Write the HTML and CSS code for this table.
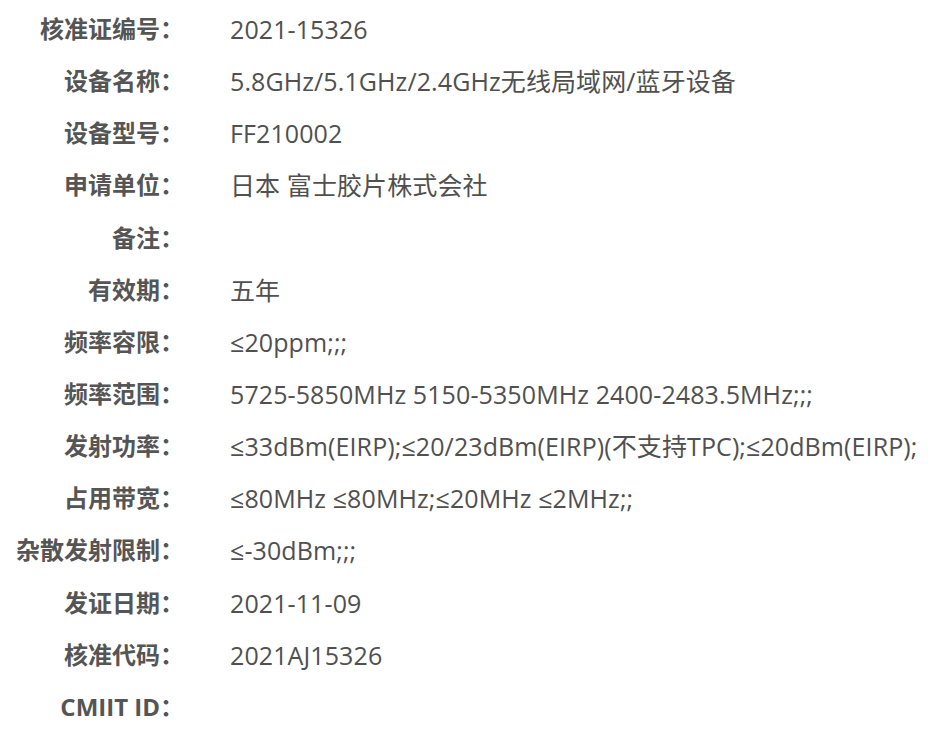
FILE: index.html
```html
<!DOCTYPE html>
<html lang="zh-CN">
<head>
<meta charset="utf-8">
<link rel="stylesheet" href="styles.css">
</head>
<body>
<div class="info">
  <div class="label">核准证编号：</div><div class="value">2021-15326</div>
  <div class="label">设备名称：</div><div class="value">5.8GHz/5.1GHz/2.4GHz无线局域网/蓝牙设备</div>
  <div class="label">设备型号：</div><div class="value">FF210002</div>
  <div class="label">申请单位：</div><div class="value">日本 富士胶片株式会社</div>
  <div class="label">备注：</div><div class="value"></div>
  <div class="label">有效期：</div><div class="value">五年</div>
  <div class="label">频率容限：</div><div class="value">≤20ppm;;;</div>
  <div class="label">频率范围：</div><div class="value">5725-5850MHz 5150-5350MHz 2400-2483.5MHz;;;</div>
  <div class="label">发射功率：</div><div class="value">≤33dBm(EIRP);≤20/23dBm(EIRP)(不支持TPC);≤20dBm(EIRP);</div>
  <div class="label">占用带宽：</div><div class="value">≤80MHz ≤80MHz;≤20MHz ≤2MHz;;</div>
  <div class="label">杂散发射限制：</div><div class="value">≤-30dBm;;;</div>
  <div class="label">发证日期：</div><div class="value">2021-11-09</div>
  <div class="label">核准代码：</div><div class="value">2021AJ15326</div>
  <div class="label">CMIIT ID：</div><div class="value"></div>
</div>
</body>
</html>
```
FILE: styles.css
```css
html, body {
  margin: 0;
  padding: 0;
  background: #ffffff;
}
body {
  font-family: "Open Sans", "Noto Sans CJK SC", sans-serif;
}
.info {
  display: grid;
  grid-template-columns: 184px auto;
  column-gap: 46px;
  padding-top: 3px;
}
.label,
.value {
  height: 52.15px;
  line-height: 52px;
  white-space: nowrap;
}
.label {
  text-align: right;
  font-size: 24px;
  font-weight: bold;
  color: #555555;
}
.value {
  font-size: 25px;
  letter-spacing: 0.1px;
  color: #505050;
}
```
